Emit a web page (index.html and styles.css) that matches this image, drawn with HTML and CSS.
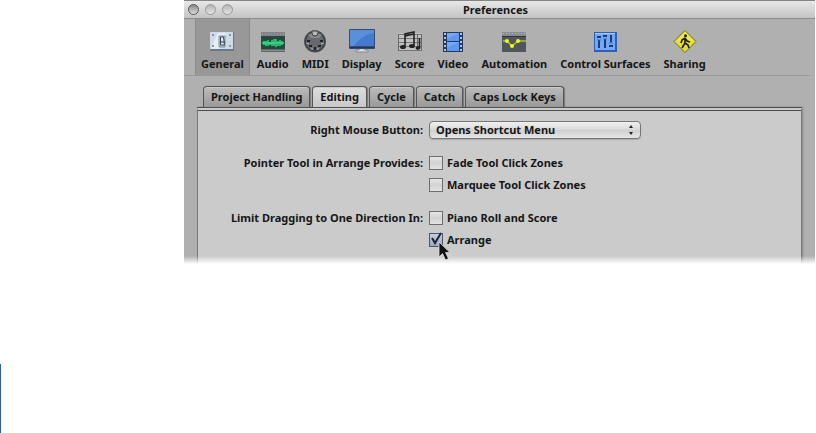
FILE: index.html
```html
<!DOCTYPE html>
<html lang="en">

<head>
    <meta charset="UTF-8">
    <meta name="viewport" content="width=device-width, initial-scale=1.0">
    <title>Preferences</title>
    <link rel="stylesheet" href="styles.css">
</head>

<body>
    <main class="window">
        <header class="titlebar">
            <div class="lights">
                <button class="light close" aria-label="Close"></button>
                <button class="light" aria-label="Minimize"></button>
                <button class="light" aria-label="Zoom"></button>
            </div>
            <h1>Preferences</h1>
        </header>

        <nav class="toolbar">
            <button class="tool active">
                <svg width="26" height="24" viewBox="0 0 26 24">
                    <rect x="1" y="3" width="24" height="19" fill="#68788d"/>
                    <rect x="1" y="3" width="23" height="17" fill="#cfdbe6"/>
                    <path d="M2 19L9 4h8L10 20H2z" fill="#e6edf3"/>
                    <path d="M10 7h6v11h-6z" fill="#b4c0cc" stroke="#8592a0"/>
                    <path d="M11.500 8h3l1 8h-4z" fill="#e1e8ef" stroke="#3a4959"/>
                    <path d="M11 13h5" stroke="#26384a"/>
                    <path d="M3 5h2v2H3zM20 5h2v2h-2zM3 16h2v2H3zM20 16h2v2h-2z" fill="#8297ac"/>
                </svg>
                General
            </button>
            <button class="tool">
                <svg width="26" height="24" viewBox="0 0 26 24">
                    <rect x="1" y="3" width="24" height="20" fill="#394344"/>
                    <rect x="1" y="3" width="24" height="4" fill="#828489"/>
                    <path d="M2 5h22" stroke="#a3a3a8" stroke-dasharray="1 2"/>
                    <rect x="2" y="8" width="22" height="12" fill="#214c3c"/>
                    <path d="M2 14h22M4 12v4M6 12v5M8 11v6M10 13v3M12 11v6M14 10v7M16 10v8M18 12v5M20 11v6M22 12v4" stroke="#35dc86" stroke-width="1.4"/>
                    <path d="M1 21.5h24" stroke="#8a8d8f" stroke-width="2"/>
                </svg>
                Audio
            </button>
            <button class="tool">
                <svg width="26" height="24" viewBox="0 0 26 24">
                    <circle cx="13" cy="12.5" r="11" fill="#4c5055"/>
                    <circle cx="13" cy="12.5" r="9.5" fill="#656a70" stroke="#35393d"/>
                    <path d="M6 6Q13 1 20 6l-3 3H9z" fill="#83898e"/>
                    <path d="M10 2v2q0 3 3 3t3-3V2z" fill="#b6b7b8" stroke="#3c4044"/>
                    <path d="M5 11h3v2H5zM18 11h3v2h-3zM7 16h3v2H7zM16 16h3v2h-3zM12 18h2v3h-2z" fill="#202327"/>
                    <path d="M4 14l3 1M19 15l3-1M10 19v2M16 19v2" stroke="#aeb2b5"/>
                </svg>
                MIDI
            </button>
            <button class="tool">
                <svg width="28" height="24" viewBox="0 0 28 24">
                    <path d="M12 17h4l1 4h3v2H8v-2h3z" fill="#d5d7da" stroke="#73777c" stroke-width=".7"/>
                    <rect x="1" y="0" width="26" height="20" rx="1" fill="#344b77"/>
                    <rect x="2" y="1" width="24" height="16" fill="#447bcf"/>
                    <path d="M2 1h24v3Q13 6 6 17H2z" fill="#5b8fda"/>
                    <path d="M2 18.5h24" stroke="#243655"/>
                </svg>
                Display
            </button>
            <button class="tool">
                <svg width="26" height="24" viewBox="0 0 26 24">
                    <path d="M1 4h24v18H1z" fill="#c1c1c1"/>
                    <path d="M1 5.5h24M1 9.5h24M1 13.5h24M1 17.5h24M1 21.5h24" stroke="#777"/>
                    <path d="M1.5 5v17M20.5 5v17M24.5 5v17" stroke="#666"/>
                    <path d="M8 17V5l9-2v13M8 7l9-2M22.5 9v10" fill="none" stroke="#222" stroke-width="1.6"/>
                    <g fill="#222">
                        <ellipse cx="6" cy="18" rx="3" ry="2"/>
                        <ellipse cx="15" cy="17" rx="3" ry="2"/>
                        <ellipse cx="21" cy="19" rx="2.5" ry="1.8"/>
                    </g>
                </svg>
                Score
            </button>
            <button class="tool">
                <svg width="22" height="24" viewBox="0 0 22 24">
                    <rect x="1" y="3" width="20" height="20" fill="#263b5c"/>
                    <path d="M5 4h12v8H5zM5 13h12v9H5z" fill="#5c9af0"/>
                    <path d="M5 4h12L5 10zM5 13h12L5 19z" fill="#74a9f3"/>
                    <path d="M3 4v18M19 4v18" stroke="#a8c4ec" stroke-width="2" stroke-dasharray="2 2"/>
                </svg>
                Video
            </button>
            <button class="tool">
                <svg width="26" height="24" viewBox="0 0 26 24">
                    <rect x="1" y="3" width="24" height="20" fill="#51565c"/>
                    <rect x="1" y="3" width="24" height="4" fill="#8a8d92"/>
                    <path d="M2 4.5h22" stroke="#b5b7ba" stroke-dasharray="1 2"/>
                    <path d="M1 7.5h24" stroke="#2e3338"/>
                    <path d="M2 12h4l5 5 6-5h8" fill="none" stroke="#a9c52a" stroke-width="1.5"/>
                    <g fill="#edf91c">
                        <circle cx="6" cy="12" r="2"/>
                        <circle cx="11" cy="17" r="2"/>
                        <circle cx="17" cy="12" r="2"/>
                    </g>
                </svg>
                Automation
            </button>
            <button class="tool">
                <svg width="26" height="24" viewBox="0 0 26 24">
                    <rect x="2" y="3" width="23" height="20" fill="#2f5fb2"/>
                    <rect x="3" y="4" width="20" height="17" fill="#72a8f5"/>
                    <path d="M3 4.5h20" stroke="#a5c9fb"/>
                    <path d="M7 11v8M13 10v9M19 6v7" stroke="#193b79" stroke-width="2"/>
                    <path d="M5 8h4M11 7h4M17 17h4" stroke="#193b79" stroke-width="2"/>
                    <path d="M5 11h4M11 10h4M17 14h4" stroke="#3d70c4"/>
                </svg>
                Control Surfaces
            </button>
            <button class="tool">
                <svg width="26" height="24" viewBox="0 0 26 24">
                    <path d="M13 1.500L24 12.500 13 23.500 2 12.500z" fill="#e7df2d" stroke="#73702a" stroke-linejoin="round"/>
                    <path d="M13 3l9 9H4z" fill="#f3ed68" opacity=".6"/>
                    <circle cx="13.5" cy="6.8" r="1.5" fill="#222"/>
                    <path d="M13 9v5l-3 5M13 14l3 2 1 3M13 9l-3 2-1 3M13 9l2 3 3 1" fill="none" stroke="#222" stroke-width="1.7"/>
                </svg>
                Sharing
            </button>
        </nav>

        <section class="content">
            <div class="tabs" role="tablist">
                <button class="tab" role="tab">Project Handling</button>
                <button class="tab active" role="tab" aria-selected="true">Editing</button>
                <button class="tab" role="tab">Cycle</button>
                <button class="tab" role="tab">Catch</button>
                <button class="tab" role="tab">Caps Lock Keys</button>
            </div>
            <form class="panel">
                <label class="name" for="right-button">Right Mouse Button:</label>
                <div class="select-box">
                    <select id="right-button">
                        <option>Opens Shortcut Menu</option>
                    </select>
                    <svg class="arrows" width="6" height="12" viewBox="0 0 6 12">
                        <path d="M3 1l2 3H1zM3 11l2-3H1z" fill="#222"/>
                    </svg>
                </div>

                <span class="name group" id="pointer-tool">Pointer Tool in Arrange Provides:</span>
                <div class="checks group" role="group" aria-labelledby="pointer-tool">
                    <label class="check"><input type="checkbox">Fade Tool Click Zones</label>
                    <label class="check"><input type="checkbox">Marquee Tool Click Zones</label>
                </div>

                <span class="name group" id="limit-drag">Limit Dragging to One Direction In:</span>
                <div class="checks group" role="group" aria-labelledby="limit-drag">
                    <label class="check"><input type="checkbox">Piano Roll and Score</label>
                    <label class="check">
                        <input type="checkbox" checked>Arrange
                        <svg class="tick" width="14" height="14" viewBox="0 0 14 14">
                            <path d="M3 6l3 5L12 1" fill="none" stroke="#1d2431" stroke-width="2"/>
                        </svg>
                        <svg class="pointer" width="13" height="20" viewBox="0 0 13 20">
                            <path d="M1 1v15l3.5-3.5L7.5 19l3-1.5-3-6H12z" fill="#111" stroke="#ddd" stroke-width=".8"/>
                        </svg>
                    </label>
                </div>
            </form>
        </section>
    </main>
    <div class="side-rule"></div>
</body>

</html>
```
FILE: styles.css
```css
* {
    box-sizing: border-box;
}

body {
    display: flex;
    flex-direction: column;
    min-height: 100vh;
    margin: 0;
    background: #fff;
    color: #161616;
    font: bold 11px/16px "Noto Sans", "Open Sans", sans-serif;
}

button,
select {
    padding: 0;
    border: 0;
    background: none;
    color: inherit;
    font: inherit;
}

.window {
    position: relative;
    overflow: hidden;
    margin: 0 1px 0 184px;
    border-top: 1px solid #858585;
    background: #b0b0b0;
}

/* bottom edge fades out into the page */
.window::after {
    content: "";
    position: absolute;
    right: 0;
    bottom: 0;
    left: 0;
    height: 10px;
    background: linear-gradient(rgba(255, 255, 255, 0), #fff 80%);
}

.titlebar {
    display: grid;
    grid-template-columns: 1fr auto 1fr;
    align-items: center;
    height: 18px;
    padding: 0 12px 0 4px;
    border-bottom: 1px solid #8c8c8c;
    background: linear-gradient(#e8e8e8, #c3c3c3);
}

.titlebar h1 {
    margin: 0;
    font: inherit;
}

.lights {
    display: flex;
    gap: 6px;
}

.light {
    width: 11px;
    height: 11px;
    border: 1px solid #999;
    border-radius: 50%;
    background: linear-gradient(#b5b5b5, #e5e5e5);
}

.light.close {
    border-color: #555;
    background: linear-gradient(#888, #ddd);
}

.toolbar {
    display: flex;
    gap: 1px;
    height: 57px;
    margin: 0 5px 0 0;
    padding-left: 11px;
    border-bottom: 1px solid #999;
}

.tool {
    display: flex;
    flex-direction: column;
    align-items: center;
    gap: 3px;
    padding: 10px 6px 0;
    white-space: nowrap;
}

.tool.active {
    background: #989898;
    box-shadow: inset 1px 0 #8a8a8a, inset -1px 0 #8a8a8a;
}

.content {
    padding: 10px 13px 0;
}

.tabs {
    display: flex;
    gap: 2px;
    padding-left: 6px;
}

.tab {
    height: 21px;
    padding: 0 7px;
    border: 1px solid #555;
    border-bottom: 0;
    border-radius: 4px 4px 0 0;
    background: linear-gradient(#bbb, #999);
    box-shadow: inset 0 1px #ccc, 1px 0 1px #777;
    white-space: nowrap;
}

.tab.active {
    background: linear-gradient(#ddd, #c8c8c8);
}

.panel {
    display: grid;
    grid-template-columns: 225px 1fr;
    column-gap: 6px;
    padding: 10px 0 17px;
    border: 1px solid #777;
    border-top: 4px double #4c4c4c;
    border-bottom: 0;
    background: #cbcbcb;
    box-shadow: 1px 0 2px #888;
}

.name {
    line-height: 18px;
    text-align: right;
    white-space: nowrap;
}

.group {
    margin-top: 15px;
}

.select-box {
    position: relative;
    width: 212px;
}

.select-box select {
    appearance: none;
    display: block;
    width: 100%;
    height: 18px;
    padding: 0 20px 0 6px;
    border: 1px solid #777;
    border-radius: 4px;
    background: linear-gradient(#f0f0f0, #d8d8d8 50%, #cecece 50%, #e6e6e6);
    box-shadow: 0 1px 1px #aaa;
}

.arrows {
    position: absolute;
    top: 3px;
    right: 7px;
    pointer-events: none;
}

.checks {
    display: flex;
    flex-direction: column;
    align-items: flex-start;
    gap: 4px;
}

.check {
    position: relative;
    display: flex;
    align-items: center;
    gap: 4px;
    line-height: 18px;
}

.check input {
    appearance: none;
    width: 14px;
    height: 14px;
    margin: 0;
    border: 1px solid #6e6e6e;
    background: linear-gradient(#e6e6e6, #d2d2d2 50%, #e2e2e2);
}

.check input:checked {
    border-color: #4c5668;
    background: linear-gradient(#c5cedc, #9ba9bd);
}

.tick,
.pointer {
    position: absolute;
    top: 1px;
    left: 0;
    pointer-events: none;
}

.check input:not(:checked) ~ .tick {
    display: none;
}

.pointer {
    z-index: 1;
    top: 10px;
    left: 9px;
}

.side-rule {
    flex: 1;
    width: 1px;
    margin-top: 98px;
    background: #2d6299;
}
```
